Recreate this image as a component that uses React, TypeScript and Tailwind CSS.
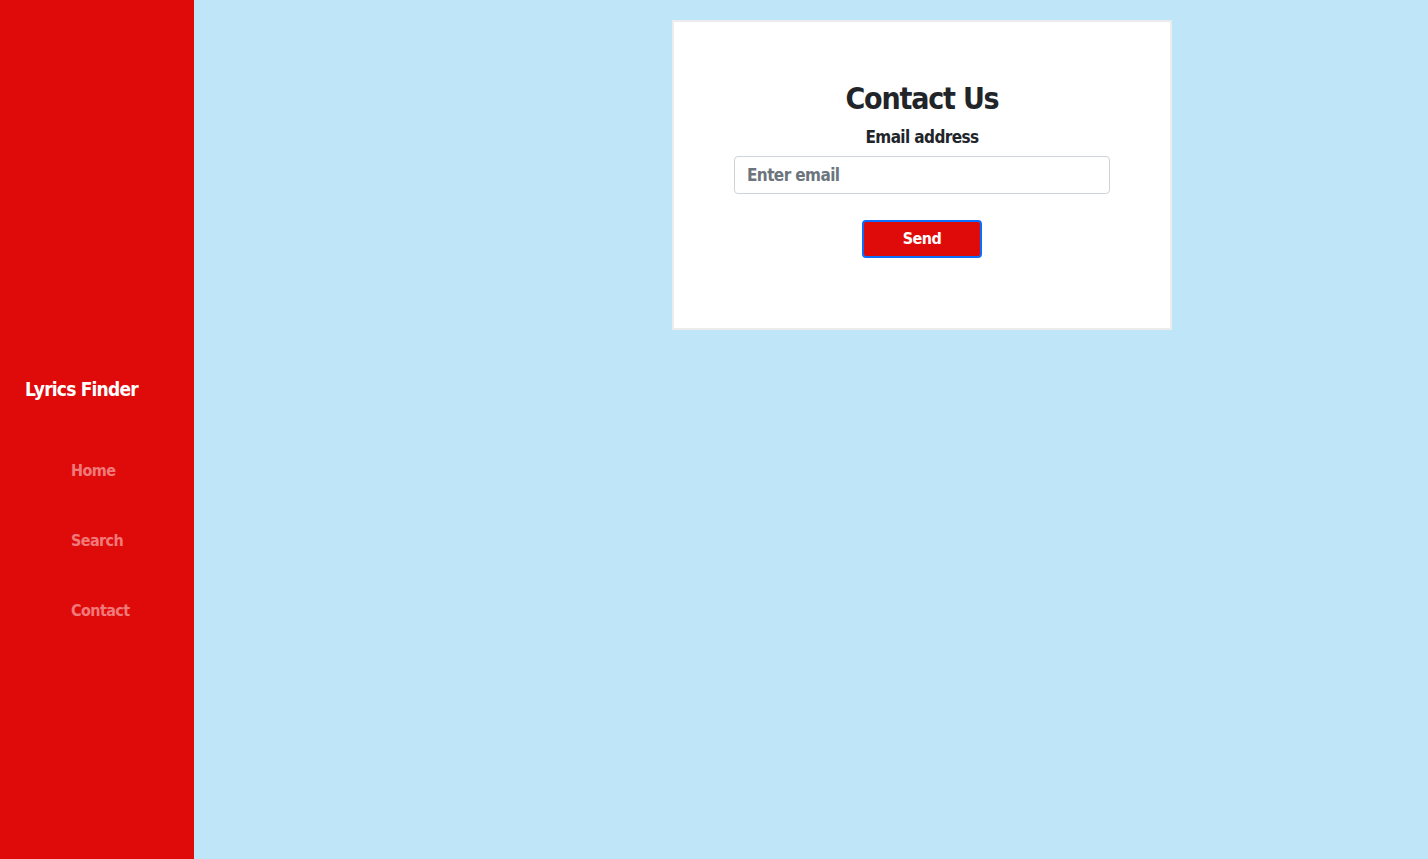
export default function App() {
  const font = "font-['Liberation_Sans_Narrow','DejaVu_Sans_Condensed',sans-serif]"

  return (
    <div className={`flex min-h-[859px] bg-[#bee5f8] ${font}`}>
      <aside className="w-[194px] shrink-0 bg-[#df0b0b] pt-[377px]">
        <h2 className="pl-[25px] text-[19px] leading-6 font-bold tracking-[-0.8px] text-white">Lyrics Finder</h2>
        <nav className="mt-[60px] flex flex-col gap-[50px] pl-[71px]">
          <a className="text-[16px] leading-5 font-bold tracking-[-0.6px] text-[#f07a7a]">Home</a>
          <a className="text-[16px] leading-5 font-bold tracking-[-0.6px] text-[#f07a7a]">Search</a>
          <a className="text-[16px] leading-5 font-bold tracking-[-0.6px] text-[#f07a7a]">Contact</a>
        </nav>
      </aside>

      <main className="flex-1 pl-[478px] pt-5">
        <div className="flex h-[310px] w-[500px] flex-col items-center border-2 border-[#ececec] bg-white pt-[62px]">
          <h1 className="text-[30px] leading-none font-bold tracking-[-1.2px] text-[#212529]">Contact Us</h1>
          <label className="mt-[15px] text-[17px] leading-none font-bold tracking-[-0.6px] text-[#212529]">Email address</label>
          <input
            type="email"
            placeholder="Enter email"
            className="mt-[10px] h-[38px] w-[376px] rounded border border-[#ced4da] px-3 text-[17px] font-bold tracking-[-0.6px] text-[#212529] placeholder:text-[#6c757d]"
          />
          <button className="mt-[26px] h-[38px] w-[120px] rounded border-2 border-[#0d6efd] bg-[#df0b0b] text-[16px] font-bold tracking-[-0.6px] text-white">
            Send
          </button>
        </div>
      </main>
    </div>
  )
}
